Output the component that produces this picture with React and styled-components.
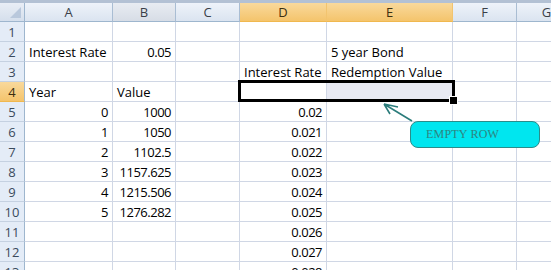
import React from "react";
import styled, { createGlobalStyle } from "styled-components";

const columns = [
  { key: "A", width: 88 },
  { key: "B", width: 63 },
  { key: "C", width: 64 },
  { key: "D", width: 87 },
  { key: "E", width: 126 },
  { key: "F", width: 64 },
  { key: "G", width: 60 },
];

const selectedCols = ["D", "E"];
const selectedRow = 4;

const data = {
  2: { A: ["Interest Rate", "left"], B: ["0.05", "right"], E: ["5 year Bond", "left"] },
  3: { D: ["Interest Rate", "left"], E: ["Redemption Value", "left"] },
  4: { A: ["Year", "left"], B: ["Value", "left"] },
  5: { A: ["0", "right"], B: ["1000", "right"], D: ["0.02", "right"] },
  6: { A: ["1", "right"], B: ["1050", "right"], D: ["0.021", "right"] },
  7: { A: ["2", "right"], B: ["1102.5", "right"], D: ["0.022", "right"] },
  8: { A: ["3", "right"], B: ["1157.625", "right"], D: ["0.023", "right"] },
  9: { A: ["4", "right"], B: ["1215.506", "right"], D: ["0.024", "right"] },
  10: { A: ["5", "right"], B: ["1276.282", "right"], D: ["0.025", "right"] },
  11: { D: ["0.026", "right"] },
  12: { D: ["0.027", "right"] },
  13: { D: ["0.028", "right"] },
};

const rows = Array.from({ length: 13 }, (_, i) => i + 1);

function App() {
  return (
    <>
      <GlobalStyle />
      <Sheet>
        <TopStrip />
        <Grid>
          <Corner>
            <CornerMark />
          </Corner>
          {columns.map((c, ci) => (
            <ColHeader
              key={c.key}
              $col={ci + 2}
              $selected={selectedCols.includes(c.key)}
              $hover={c.key === "B"}
            >
              {c.key}
            </ColHeader>
          ))}
          {rows.map((r) => (
            <React.Fragment key={r}>
              <RowHeader $row={r + 1} $selected={r === selectedRow}>
                {r}
              </RowHeader>
              {columns.map((c, ci) => {
                const cell = data[r] && data[r][c.key];
                return (
                  <Cell
                    key={c.key}
                    $row={r + 1}
                    $col={ci + 2}
                    $align={cell ? cell[1] : "left"}
                    $highlight={r === selectedRow && c.key === "E"}
                  >
                    {cell ? cell[0] : ""}
                  </Cell>
                );
              })}
            </React.Fragment>
          ))}
          <Selection $row={selectedRow + 1} $from={5} $to={7}>
            <FillHandle />
          </Selection>
        </Grid>
        <Arrow width="40" height="30" viewBox="0 0 40 30">
          <path
            d="M4 3 L32 20 M4 3 L18 6 M4 3 L10 13"
            fill="none"
            stroke="#2b7c7b"
            strokeWidth="1.6"
          />
        </Arrow>
        <Callout>EMPTY ROW</Callout>
      </Sheet>
    </>
  );
}

const GlobalStyle = createGlobalStyle`
  html, body {
    margin: 0;
    background: #ffffff;
    overflow: hidden;
  }
`;

const Sheet = styled.div`
  position: relative;
  width: 551px;
  height: 270px;
  overflow: hidden;
  font-family: "Open Sans", "Liberation Sans", sans-serif;
  font-size: 13px;
  color: #000000;
`;

const TopStrip = styled.div`
  height: 3px;
  background: #b3c1d4;
`;

const Grid = styled.div`
  display: grid;
  grid-template-columns: 25px ${columns.map((c) => `${c.width}px`).join(" ")};
  grid-template-rows: 19px repeat(13, 20px);
`;

const Corner = styled.div`
  grid-row: 1;
  grid-column: 1;
  position: relative;
  box-sizing: border-box;
  background: linear-gradient(#e9eef6, #d5dfec);
  border-right: 1px solid #9eb6ce;
  border-bottom: 1px solid #9eb6ce;
`;

const CornerMark = styled.div`
  position: absolute;
  right: 3px;
  bottom: 3px;
  width: 0;
  height: 0;
  border-left: 11px solid transparent;
  border-bottom: 11px solid #b9c8dc;
`;

const ColHeader = styled.div`
  grid-row: 1;
  grid-column: ${(p) => p.$col};
  box-sizing: border-box;
  display: flex;
  align-items: center;
  justify-content: center;
  color: ${(p) => (p.$selected ? "#3b2f10" : "#3a3f48")};
  background: ${(p) =>
    p.$selected
      ? "linear-gradient(#f9d99c, #f4c46c)"
      : p.$hover
      ? "linear-gradient(#e8ecf2, #d7dde6)"
      : "linear-gradient(#eef3fa, #dbe4f0)"};
  border-right: 1px solid ${(p) => (p.$selected ? "#f2c46f" : "#a9bdd3")};
  border-bottom: 1px solid ${(p) => (p.$selected ? "#f0b84f" : "#9eb6ce")};
`;

const RowHeader = styled.div`
  grid-row: ${(p) => p.$row};
  grid-column: 1;
  box-sizing: border-box;
  display: flex;
  align-items: center;
  justify-content: center;
  color: ${(p) => (p.$selected ? "#3b2f10" : "#3a4a5c")};
  background: ${(p) =>
    p.$selected ? "linear-gradient(#f9d99c, #f4c46c)" : "#e4ecf7"};
  border-right: 1px solid #9eb6ce;
  border-bottom: 1px solid ${(p) => (p.$selected ? "#f0b84f" : "#c5d1e1")};
`;

const Cell = styled.div`
  grid-row: ${(p) => p.$row};
  grid-column: ${(p) => p.$col};
  box-sizing: border-box;
  display: flex;
  align-items: flex-end;
  justify-content: ${(p) => (p.$align === "right" ? "flex-end" : "flex-start")};
  padding: 0 4px 0 4px;
  white-space: nowrap;
  overflow: visible;
  letter-spacing: ${(p) => (p.$align === "right" ? "-0.5px" : "0")};
  background: ${(p) => (p.$highlight ? "#e8eaf3" : "#ffffff")};
  border-right: 1px solid #d0d7e5;
  border-bottom: 1px solid #d0d7e5;
`;

const Selection = styled.div`
  grid-row: ${(p) => p.$row};
  grid-column: ${(p) => `${p.$from} / ${p.$to}`};
  position: relative;
  margin: -2px -2px 0 -2px;
  box-sizing: border-box;
  border: 3px solid #000000;
  pointer-events: none;
`;

const FillHandle = styled.div`
  position: absolute;
  right: -6px;
  bottom: -6px;
  width: 7px;
  height: 7px;
  background: #000000;
  border: 1px solid #ffffff;
`;

const Arrow = styled.svg`
  position: absolute;
  left: 380px;
  top: 101px;
`;

const Callout = styled.div`
  position: absolute;
  left: 410px;
  top: 121px;
  width: 130px;
  height: 27px;
  box-sizing: border-box;
  display: flex;
  align-items: center;
  padding-left: 15px;
  border: 1px solid #2b8c8a;
  border-radius: 8px;
  background: #00e6ef;
  color: #2f8480;
  font-family: "Liberation Serif", serif;
  font-size: 12px;
  letter-spacing: 0.2px;
`;

export default App;
